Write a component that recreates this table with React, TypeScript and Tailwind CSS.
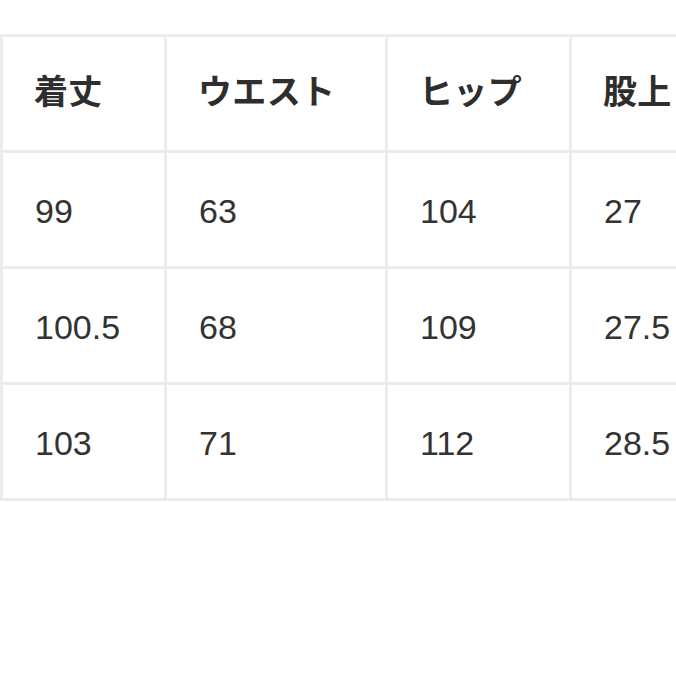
const HEAD = ['着丈', 'ウエスト', 'ヒップ', '股上']

const ROWS = [
  ['99', '63', '104', '27'],
  ['100.5', '68', '109', '27.5'],
  ['103', '71', '112', '28.5'],
]

export default function App() {
  return (
    <div className="w-[676px] h-[676px] overflow-hidden bg-white">
      <div className="mt-[34px] w-[900px] grid grid-cols-[161px_218px_181px_320px] auto-rows-[113px] gap-[3px] p-[3px] bg-[#ececec]">
        {HEAD.map((h) => (
          <div
            key={h}
            className="bg-white flex items-center pl-[31px] pb-[8px] text-[34px] font-bold text-[#2e2e2e] font-['Noto_Sans_CJK_JP',sans-serif] tracking-[0.01em]"
          >
            {h}
          </div>
        ))}
        {ROWS.flat().map((v, i) => (
          <div
            key={i}
            className="bg-white flex items-center pl-[32px] pt-[3px] text-[34px] text-[#333] font-['Liberation_Sans',Arial,sans-serif]"
          >
            {v}
          </div>
        ))}
      </div>
    </div>
  )
}
